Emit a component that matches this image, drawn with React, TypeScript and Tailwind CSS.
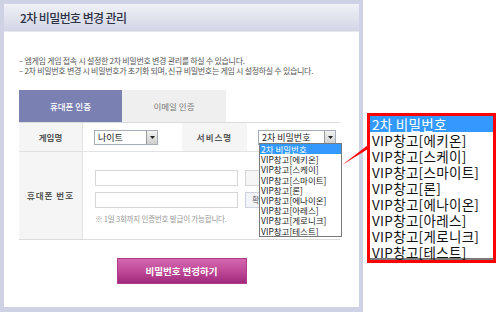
import React from "react";

const F = { fontFamily: '"Noto Sans CJK KR", "Noto Sans", sans-serif' } as React.CSSProperties;

const smallItems = [
  "2차 비밀번호",
  "VIP창고[에키온]",
  "VIP창고[스케이]",
  "VIP창고[스마이트]",
  "VIP창고[론]",
  "VIP창고[에나이온]",
  "VIP창고[아레스]",
  "VIP창고[게로니크]",
  "VIP창고[테스트]",
];

function Select({ label, w }: { label: string; w: string }) {
  return (
    <div className={`flex h-[15px] ${w} border border-[#a5acb5] bg-white`}>
      <div className="flex-1 text-[9px] leading-[13px] pl-[3px] text-[#222]">{label}</div>
      <div className="w-[11px] h-[13px] bg-gradient-to-b from-[#f2f2f2] to-[#cfcfcf] border-l border-[#9a9a9a] flex items-center justify-center">
        <svg width="5" height="3" viewBox="0 0 5 3"><path d="M0 0H5L2.5 3Z" fill="#222" /></svg>
      </div>
    </div>
  );
}

export default function App() {
  return (
    <div className="relative w-[497px] h-[312px] bg-white overflow-hidden" style={F}>
      <div className="w-[363px] h-[312px] bg-[#cfd1e4] pt-[4px] pl-[4px] pr-[4px] pb-[5px]">
        <div className="w-[355px] h-[303px] bg-white flex flex-col">
          <div className="h-[28px] bg-gradient-to-b from-[#f0f1f7] to-[#d2d5e5] border-b border-[#e8e9ef] flex items-center pl-[16px]">
            <span className="text-[12px] tracking-[-0.6px] text-[#2e3245] font-medium leading-none">2차 비밀번호 변경 관리</span>
          </div>
          <div className="pl-[15px] pt-[24px] text-[8px] leading-[10px] text-[#555] tracking-[-0.3px]">
            <div>– 엠게임 게임 접속 시 설정한 2차 비밀번호 변경 관리를 하실 수 있습니다.</div>
            <div>– 2차 비밀번호 변경 시 비밀번호가 초기화 되며, 신규 비밀번호는 게임 시 설정하실 수 있습니다.</div>
          </div>
          <div className="ml-[15px] mt-[14px] w-[321px]">
            <div className="flex h-[32px]">
              <div className="w-[103px] bg-[#7a80b2] text-white text-[8.5px] flex items-center justify-center font-medium">휴대폰 인증</div>
              <div className="w-[104px] bg-[#efefef] text-[#777] text-[8.5px] flex items-center justify-center">이메일 인증</div>
            </div>
            <div className="border-t border-b border-[#dcdcdc]">
              <div className="flex h-[29px] border-b border-[#e2e2e2]">
                <div className="w-[64px] bg-[#f5f5f5] border-r border-[#e2e2e2] flex items-center justify-center text-[8.5px] font-bold text-[#555]">게임명</div>
                <div className="w-[99px] flex items-center pl-[11px]">
                  <Select label="나이트" w="w-[64px]" />
                </div>
                <div className="w-[65px] bg-[#f5f5f5] flex items-center justify-center text-[8.5px] font-bold text-[#555] tracking-[1px]">서비스명</div>
                <div className="flex-1 flex items-center pl-[11px]">
                  <Select label="2차 비밀번호" w="w-[78px]" />
                </div>
              </div>
              <div className="flex h-[87px]">
                <div className="w-[64px] bg-[#f5f5f5] border-r border-[#e2e2e2] flex items-center justify-center text-[8.5px] font-bold text-[#555] tracking-[1px]">휴대폰 번호</div>
                <div className="flex-1 pl-[12px] pt-[18px] flex flex-col">
                  <div className="flex gap-[7px]">
                    <div className="w-[143px] h-[16px] border border-[#d6d6d6] bg-white" />
                    <div className="w-[40px] h-[16px] border border-[#d6d6d6] bg-[#f6f6f6]" />
                  </div>
                  <div className="flex gap-[7px] mt-[6px]">
                    <div className="w-[143px] h-[16px] border border-[#d6d6d6] bg-white" />
                    <div className="w-[40px] h-[16px] border border-[#cfd3e0] bg-[#f3f4f8] text-[8px] text-[#666] pl-[6px] leading-[14px]">확인</div>
                  </div>
                  <div className="mt-[5px] text-[7.5px] text-[#999] tracking-[-0.2px]">※ 1일 3회까지 인증번호 발급이 가능합니다.</div>
                </div>
              </div>
            </div>
          </div>
          <div className="flex justify-center mt-[18px]">
            <div className="w-[130px] h-[26px] bg-gradient-to-b from-[#d466ae] via-[#c04a98] to-[#a0287c] border border-[#b13c8a] flex items-center justify-center text-white text-[9.5px] font-bold">
              비밀번호 변경하기
            </div>
          </div>
        </div>
      </div>

      {/* small open dropdown list */}
      <div className="absolute left-[259px] top-[143px] w-[83px] h-[94px] bg-white border border-[#7a7a7a] flex flex-col overflow-hidden">
        {smallItems.map((t, i) => (
          <div key={t} className={`h-[10.2px] text-[8.5px] leading-[10.2px] pl-[1px] ${i === 0 ? "bg-[#3399ff] text-white" : "text-[#222]"}`}>{t}</div>
        ))}
      </div>

      {/* callout wedge */}
      <svg className="absolute left-0 top-0" width="497" height="312">
        <polygon points="342,165 368,145 368,149" fill="#ff0000" />
      </svg>

      {/* enlarged red box */}
      <div className="absolute left-[367px] top-[113px] w-[129px] h-[150px] border-[3px] border-[#ff0000] bg-white">
        <div className="h-full border-b-2 border-[#7a7a7a] flex flex-col">
          {smallItems.map((t, i) => (
            <div key={t} className={`h-[16px] text-[13.5px] tracking-[0.3px] leading-[16px] pl-[2px] ${i === 0 ? "bg-[#3399ff] text-white" : "text-[#111]"}`}>{t}</div>
          ))}
        </div>
      </div>
    </div>
  );
}
